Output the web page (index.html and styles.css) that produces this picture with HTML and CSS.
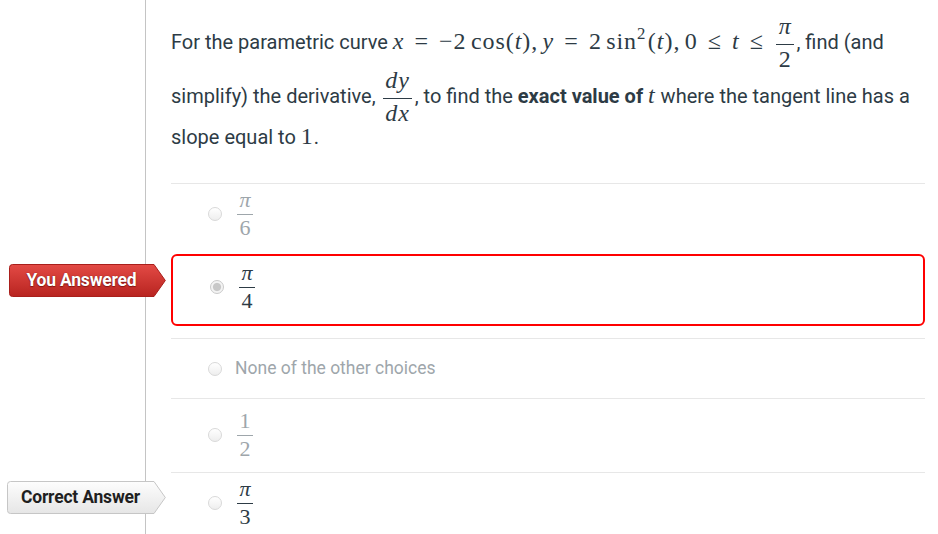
FILE: index.html
```html
<!DOCTYPE html>
<html lang="en">
<head>
<meta charset="utf-8">
<title>Question</title>
<link rel="stylesheet" href="styles.css">
</head>
<body>
<div class="page">
  <aside class="gutter"></aside>
  <main class="question">
    <p class="prompt">For the parametric curve <span class="math"><i class="mi">x</i><span class="mrel">=</span>−2<span class="mop">cos</span>(<i class="mi">t</i>),<span class="mpunct"></span><i class="mi">y</i><span class="mrel">=</span>2<span class="mop">sin</span><sup class="msup">2</sup><span class="mthin"></span>(<i class="mi">t</i>),<span class="mpunct"></span>0<span class="mrel">≤</span><i class="mi">t</i><span class="mrel">≤</span><span class="frac"><span class="frac-num frac-num--short"><i class="mi">π</i></span><span class="frac-bar"></span><span class="frac-den">2</span></span></span>, find (and simplify) the derivative, <span class="math"><span class="frac"><span class="frac-num"><i class="mi">dy</i></span><span class="frac-bar"></span><span class="frac-den"><i class="mi">dx</i></span></span></span>, to find the <strong>exact value of</strong> <span class="math"><i class="mi">t</i></span> where the tangent line has a slope equal to <span class="math">1</span>.</p>

    <div class="answers">
      <div class="answer answer--muted">
        <div class="answer-label"><span class="radio"></span><span class="math"><span class="frac"><span class="frac-num frac-num--short"><i class="mi">π</i></span><span class="frac-bar"></span><span class="frac-den">6</span></span></span></div>
      </div>

      <div class="answer answer--selected">
        <div class="badge badge--answered">
          <svg class="badge-shape" width="157" height="33" viewBox="0 0 157 33" aria-hidden="true">
            <defs>
              <linearGradient id="gRed" x1="0" y1="0" x2="0" y2="1">
                <stop offset="0" stop-color="#e34a45"/>
                <stop offset="1" stop-color="#b82420"/>
              </linearGradient>
            </defs>
            <path d="M3.5 0.5 H145 L156.3 16.5 L145 32.5 H3.5 Q0.5 32.5 0.5 29.5 V3.5 Q0.5 0.5 3.5 0.5 Z" fill="url(#gRed)" stroke="#a91f1b"/>
          </svg>
          <span class="badge-text">You Answered</span>
        </div>
        <div class="answer-label"><span class="radio radio--checked"></span><span class="math"><span class="frac"><span class="frac-num frac-num--short"><i class="mi">π</i></span><span class="frac-bar"></span><span class="frac-den">4</span></span></span></div>
      </div>

      <div class="answer answer--muted">
        <div class="answer-label answer-label--text"><span class="radio"></span><span class="answer-text">None of the other choices</span></div>
      </div>

      <div class="answer answer--muted">
        <div class="answer-label"><span class="radio"></span><span class="math"><span class="frac"><span class="frac-num">1</span><span class="frac-bar"></span><span class="frac-den">2</span></span></span></div>
      </div>

      <div class="answer answer--correct">
        <div class="badge badge--correct">
          <svg class="badge-shape" width="159" height="33" viewBox="0 0 159 33" aria-hidden="true">
            <defs>
              <linearGradient id="gGray" x1="0" y1="0" x2="0" y2="1">
                <stop offset="0" stop-color="#fdfdfd"/>
                <stop offset="1" stop-color="#e6e6e6"/>
              </linearGradient>
            </defs>
            <path d="M3.5 0.5 H147 L158.3 16.5 L147 32.5 H3.5 Q0.5 32.5 0.5 29.5 V3.5 Q0.5 0.5 3.5 0.5 Z" fill="url(#gGray)" stroke="#c6c6c6"/>
          </svg>
          <span class="badge-text">Correct Answer</span>
        </div>
        <div class="answer-label"><span class="radio"></span><span class="math"><span class="frac"><span class="frac-num frac-num--short"><i class="mi">π</i></span><span class="frac-bar"></span><span class="frac-den">3</span></span></span></div>
      </div>
    </div>
  </main>
</div>
</body>
</html>
```

FILE: styles.css
```css
html, body {
  margin: 0;
  padding: 0;
  background: #fff;
  overflow: hidden;
}

body {
  font-family: Roboto, "Liberation Sans", Arial, sans-serif;
  color: #2d3b45;
}

.page {
  display: flex;
  min-height: 100vh;
}

.gutter {
  flex: 0 0 145px;
  border-right: 1px solid #c4c4c4;
}

.question {
  width: 754px;
  padding: 22px 0 0 25px;
}

.prompt {
  margin: 0 0 32px;
  font-size: 20px;
  line-height: 27px;
}

.prompt strong {
  font-weight: 700;
}

/* ---------- math ---------- */
.math {
  font-family: "Liberation Serif", "DejaVu Serif", serif;
  font-size: 24px;
  line-height: 1;
  letter-spacing: 0.04em;
  white-space: nowrap;
}

.mi {
  font-style: italic;
}

.mrel {
  margin: 0 0.42em;
}

.mop {
  margin-left: 0.18em;
}

.mpunct {
  display: inline-block;
  width: 0.18em;
}

.mthin {
  display: inline-block;
  width: 0.06em;
}

.msup {
  font-size: 0.7em;
  line-height: 0;
  vertical-align: 0.6em;
}

.frac {
  display: inline-block;
  vertical-align: -0.75em;
  text-align: center;
  margin: 0 0.1em;
}

.frac-num {
  display: block;
  line-height: 0.88;
  padding: 0 0.1em 0.3em;
}

.frac-num--short {
  margin-top: -6px;
}

.frac-bar {
  display: block;
  height: 1px;
  background: currentColor;
}

.frac-den {
  display: block;
  line-height: 0.88;
  padding: 0.15em 0.1em 0;
}

/* ---------- answers ---------- */
.answers {
  display: flex;
  flex-direction: column;
}

.answer {
  position: relative;
  border-top: 1px solid #e7e7e7;
  padding: 12px 0 14px 37px;
}

.answer-label {
  font-size: 17.5px;
  line-height: 33px;
  white-space: nowrap;
}

.answer-label--text {
  padding-top: 2px;
  line-height: 31px;
}

.answer-label .math {
  font-size: 22px;
  letter-spacing: 0.02em;
}

.answer .frac-num {
  padding-bottom: 0.2em;
}

.answer--muted {
  color: #9ea6ab;
}

.answer--selected {
  border: 2px solid #ff0000;
  border-radius: 6px;
  margin: 3px 0 12px;
  padding: 13px 0 13px 37px;
}

.answer--correct {
  color: #2d3b45;
}

.radio {
  display: inline-block;
  box-sizing: border-box;
  width: 14px;
  height: 14px;
  margin-right: 13px;
  border: 1px solid #d9d9d9;
  border-radius: 50%;
  background: linear-gradient(#ffffff, #eeeeee);
  vertical-align: middle;
}

.radio--checked {
  border-color: #cacaca;
  background: radial-gradient(circle, #c8c8c8 0, #c8c8c8 3.6px, #f4f4f4 4.6px);
}

/* ---------- badges ---------- */
.badge {
  position: absolute;
  height: 33px;
  display: flex;
}

.badge-shape {
  position: absolute;
  left: 0;
  top: 0;
}

.badge-text {
  position: relative;
  width: calc(100% - 12px);
  text-align: center;
  font-family: Roboto, "Liberation Sans", Arial, sans-serif;
  font-weight: 700;
  font-size: 17.5px;
  line-height: 33px;
  letter-spacing: -0.2px;
}

.badge--answered {
  left: -164px;
  top: 8px;
  width: 157px;
}

.badge--answered .badge-text {
  color: #fff;
  text-shadow: 0 0 1px #7a1210, 0 1px 1px rgba(90, 10, 8, 0.6);
}

.badge--correct {
  left: -164px;
  top: 8px;
  width: 159px;
}

.badge--correct .badge-text {
  color: #1f1f1f;
}
```
